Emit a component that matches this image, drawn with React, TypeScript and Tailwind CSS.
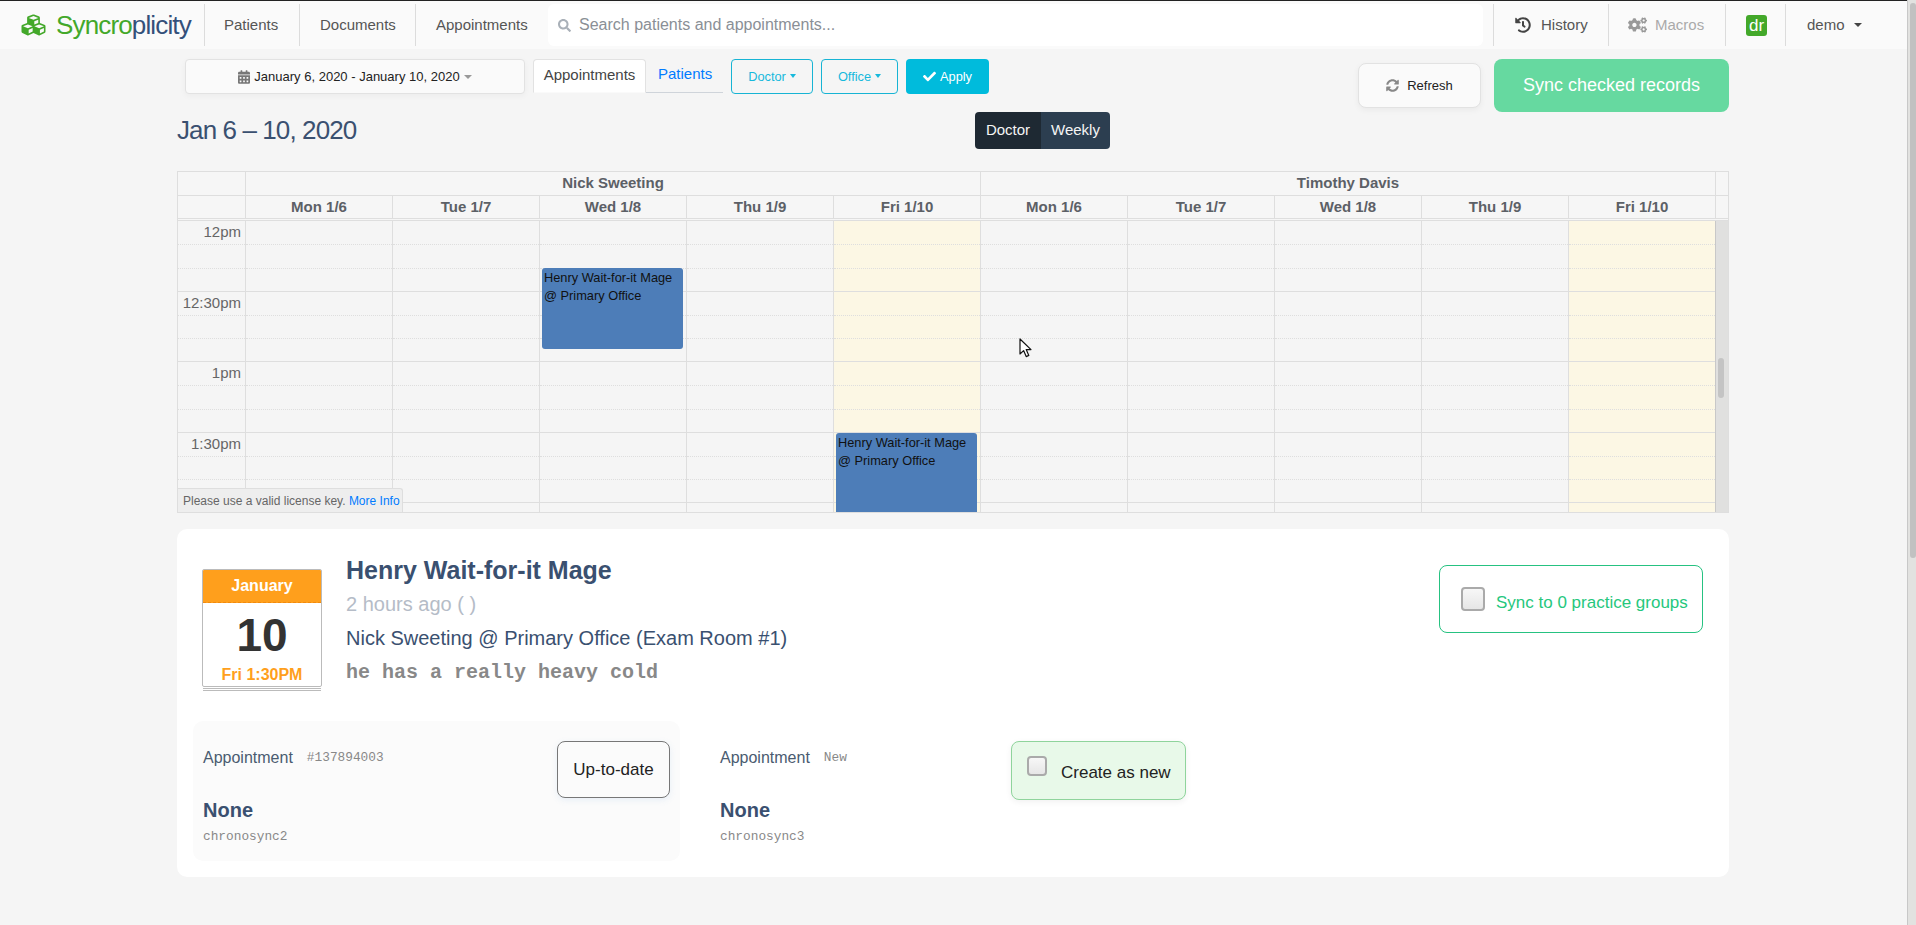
import React from "react";
import { FaCubes, FaSearch, FaHistory, FaCogs, FaCalendarAlt, FaCheck, FaSyncAlt } from "react-icons/fa";

const slots = [
  { h: "h-[24px]", b: "border-dotted" },
  { h: "h-[24px]", b: "border-dotted" },
  { h: "h-[23px]", b: "border-solid" },
  { h: "h-[24px]", b: "border-dotted" },
  { h: "h-[23px]", b: "border-dotted" },
  { h: "h-[23px]", b: "border-solid" },
  { h: "h-[24px]", b: "border-dotted" },
  { h: "h-[24px]", b: "border-dotted" },
  { h: "h-[23px]", b: "border-solid" },
  { h: "h-[24px]", b: "border-dotted" },
  { h: "h-[23px]", b: "border-dotted" },
  { h: "h-[23px]", b: "border-solid" },
];

const days = ["Mon 1/6", "Tue 1/7", "Wed 1/8", "Thu 1/9", "Fri 1/10"];
const allDays = [...days, ...days];
const times: Record<number, string> = { 0: "12pm", 3: "12:30pm", 6: "1pm", 9: "1:30pm" };

function Slots({ gutter }: { gutter?: boolean }) {
  return (
    <>
      {slots.map((s, i) => (
        <div key={i} className={`${s.h} ${s.b} border-b border-[#dedede] flex items-start justify-end pr-[4px]`}>
          {gutter && times[i] ? (
            <span className="text-[15px] leading-[20px] pt-[1px] text-[#666]">{times[i]}</span>
          ) : null}
        </div>
      ))}
    </>
  );
}

function EventBlock({ top }: { top: string }) {
  return (
    <div className={`absolute left-[2px] right-[3px] ${top} h-[81px] rounded-[3px] bg-[#4d7db8] px-[2px] pt-[1px] text-[12.8px] leading-[18px] text-[#111]`}>
      Henry Wait-for-it Mage
      <br />@ Primary Office
    </div>
  );
}

function NavItem({ children, className = "" }: { children: React.ReactNode; className?: string }) {
  return <div className={`h-[42px] flex items-center border-l border-[#dcdcdc] text-[15px] ${className}`}>{children}</div>;
}

function Check({ size }: { size: string }) {
  return (
    <span className={`${size} block shrink-0 rounded-[4px] border-2 border-[#aaa] bg-[linear-gradient(#f7f7f7,#e6e6e6)]`} />
  );
}

function Caret({ color }: { color: string }) {
  return <span className={`inline-block w-0 h-0 border-x-[3px] border-x-transparent border-t-[4px] ${color}`} />;
}

export default function App() {
  return (
    <div className="flex h-screen overflow-hidden bg-[#f5f5f5] font-['Liberation_Sans',Arial,sans-serif]">
      <div className="w-[1907px] shrink-0">
        <div className="h-[1px] bg-[#222]" />
        {/* Nav */}
        <div className="h-[48px] bg-[#fafafa] flex items-center">
          <div className="w-[204px] h-[42px] flex items-center pl-[20px]">
            <FaCubes className="w-[27px] h-[24px] text-[#43a82a] shrink-0" />
            <span className="ml-[9px] text-[26px] leading-[30px] tracking-[-0.85px] text-[#43a82a]">
              Syncro<span className="text-[#34507a]">plicity</span>
            </span>
          </div>
          <NavItem className="w-[95px] pl-[19px] text-[#555]">Patients</NavItem>
          <NavItem className="w-[116px] pl-[20px] text-[#555]">Documents</NavItem>
          <NavItem className="w-[133px] pl-[20px] text-[#555]">Appointments</NavItem>
          <div className="w-[935px] h-[42px] bg-white rounded-[6px] flex items-center pl-[10px] text-[16px] text-[#8a8f96]">
            <FaSearch className="w-[13px] h-[13px] text-[#a9b0b8] mr-[8px]" />
            Search patients and appointments...
          </div>
          <div className="w-[10px]" />
          <NavItem className="w-[115px] pl-[21px] text-[#555]">
            <FaHistory className="w-[16px] h-[16px] text-[#444] mr-[10px]" />
            History
          </NavItem>
          <NavItem className="w-[117px] pl-[19px] text-[#aaa]">
            <FaCogs className="w-[19px] h-[16px] text-[#999] mr-[8px]" />
            Macros
          </NavItem>
          <NavItem className="w-[60px] pl-[20px]">
            <span className="w-[21px] h-[21px] rounded-[3px] bg-[#43a82a] text-white text-[17px] leading-[21px] text-center">dr</span>
          </NavItem>
          <NavItem className="flex-1 pl-[21px] text-[#555]">
            demo
            <span className="ml-[9px] inline-block w-0 h-0 border-x-[4px] border-x-transparent border-t-[4px] border-t-[#444]" />
          </NavItem>
        </div>

        {/* Main */}
        <div className="ml-[177px] w-[1552px] pt-[10px]">
          <div className="h-[53px] flex justify-between items-start">
            <div className="flex items-start ml-[8px]">
              <div className="w-[340px] h-[35px] rounded-[4px] border border-[#e2e2e2] bg-[#fafafa] shadow-[0_2px_6px_rgba(0,0,0,0.04)] flex items-center justify-center text-[13px] text-[#222]">
                <FaCalendarAlt className="w-[12px] h-[14px] text-[#777] mr-[4px]" />
                January 6, 2020 - January 10, 2020
                <span className="ml-[4px] inline-block w-0 h-0 border-x-[4px] border-x-transparent border-t-[4px] border-t-[#999]" />
              </div>
              <div className="ml-[8px] flex h-[34px] border-b border-[#cfd4da]">
                <div className="w-[113px] h-[34px] rounded-t-[4px] border border-[#e2e2e2] border-b-[#fafafa] bg-white flex items-center justify-center pb-[2px] text-[15px] text-[#444]">
                  Appointments
                </div>
                <div className="w-[77px] flex items-center pl-[12px] pb-[2px] text-[15px] text-[#007bff]">Patients</div>
              </div>
              <div className="ml-[8px] w-[82px] h-[35px] rounded-[4px] border border-[#17b4d4] flex items-center justify-center text-[12.8px] text-[#17b9dc]">
                Doctor<span className="ml-[4px] -mt-[2px] flex"><Caret color="border-t-[#17b9dc]" /></span>
              </div>
              <div className="ml-[8px] w-[77px] h-[35px] rounded-[4px] border border-[#17b4d4] flex items-center justify-center text-[12.8px] text-[#17b9dc]">
                Office<span className="ml-[4px] -mt-[2px] flex"><Caret color="border-t-[#17b9dc]" /></span>
              </div>
              <div className="ml-[8px] w-[83px] h-[35px] rounded-[4px] bg-[#00bbdc] flex items-center justify-center text-[12.8px] text-white">
                <FaCheck className="w-[13px] h-[13px] mr-[4px]" />
                Apply
              </div>
            </div>
            <div className="flex items-start">
              <div className="mt-[4px] w-[123px] h-[45px] rounded-[8px] border border-[#e2e2e2] bg-[#fafafa] shadow-[0_2px_6px_rgba(0,0,0,0.05)] flex items-center justify-center text-[13px] text-[#222]">
                <FaSyncAlt className="w-[13px] h-[13px] text-[#888] mr-[8px]" />
                Refresh
              </div>
              <div className="ml-[13px] w-[235px] h-[53px] rounded-[8px] bg-[#66d9a0] flex items-center justify-center text-[18px] text-white">
                Sync checked records
              </div>
            </div>
          </div>

          <div className="h-[37px] flex items-center">
            <div className="w-[798px] text-[26px] leading-[37px] tracking-[-0.9px] text-[#3a5070]">Jan 6 – 10, 2020</div>
            <div className="flex h-[37px] rounded-[4px] overflow-hidden text-[15px] text-[#f5f5f5]">
              <div className="w-[66px] bg-[#1e2933] flex items-center justify-center">Doctor</div>
              <div className="w-[69px] bg-[#2c3e50] flex items-center justify-center">Weekly</div>
            </div>
          </div>

          {/* Calendar */}
          <div className="mt-[22px] relative border border-[#dedede] bg-[#f6f6f6]">
            <div className="flex h-[24px] border-b border-[#dedede] text-[15px] font-bold text-[#5c6066]">
              <div className="w-[67px]" />
              <div className="flex-1 border-l border-[#dedede] flex items-center justify-center">Nick Sweeting</div>
              <div className="flex-1 border-l border-[#dedede] flex items-center justify-center">Timothy Davis</div>
              <div className="w-[13px] border-l border-[#dedede]" />
            </div>
            <div className="flex h-[23px] border-b border-[#dedede] text-[15px] font-bold text-[#5c6066]">
              <div className="w-[67px]" />
              {allDays.map((d, i) => (
                <div key={i} className="flex-1 basis-0 border-l border-[#dedede] flex items-center justify-center">{d}</div>
              ))}
              <div className="w-[13px] border-l border-[#dedede]" />
            </div>
            <div className="h-[1px]" />
            <div className="relative flex h-[292px] overflow-hidden border-t border-[#dedede] bg-[#f5f5f5]">
              <div className="w-[67px]"><Slots gutter /></div>
              {allDays.map((d, i) => (
                <div key={i} className={`flex-1 basis-0 relative border-l border-[#dedede] ${i % 5 === 4 ? "bg-[#fcf7e4]" : ""}`}>
                  <Slots />
                  {i === 2 ? <EventBlock top="top-[47px]" /> : null}
                  {i === 4 ? <EventBlock top="top-[212px]" /> : null}
                </div>
              ))}
              <div className="w-[13px] border-l border-[#c8c8c8] bg-[#e0e0df] pt-[137px] pl-[2px]">
                <div className="w-[6px] h-[40px] rounded-[3px] bg-[#c4c4c4]" />
              </div>
              {/* Mouse pointer */}
              <svg className="absolute left-[841px] top-[117px]" width="14" height="20" viewBox="0 0 14 20">
                <path d="M1 1 L1 16 L4.6 12.6 L7.2 18.6 L9.8 17.4 L7.2 11.6 L12 11.6 Z" fill="#fff" stroke="#111" strokeWidth="1.2" strokeLinejoin="round" />
              </svg>
            </div>
            <div className="absolute left-0 bottom-0 w-[225px] h-[24px] rounded-tr-[3px] border-t border-r border-[#dedede] bg-[#eeeeee] flex items-center pl-[5px] text-[12px] text-[#666] whitespace-nowrap">
              Please use a valid license key.&nbsp;<span className="text-[#007bff]">More Info</span>
            </div>
          </div>

          {/* Details card */}
          <div className="mt-[16px] h-[348px] rounded-[10px] bg-white pt-[26px]">
            <div className="h-[166px] flex items-start">
              <div className="ml-[25px] mt-[14px] w-[120px] shrink-0">
                <div className="border border-[#bbb] rounded-[2px] overflow-hidden bg-white">
                  <div className="h-[33px] bg-[#ff9f1c] border-b border-dashed border-[#f08a10] flex items-center justify-center text-[16px] font-bold text-white">January</div>
                  <div className="h-[83px] flex flex-col items-center">
                    <div className="mt-[6px] text-[46px] leading-[52px] font-bold text-[#333]">10</div>
                    <div className="mt-[4px] text-[16px] leading-[20px] font-bold text-[#ff9f1c]">Fri 1:30PM</div>
                  </div>
                </div>
                <div className="mt-[1px] mx-[1px] h-[3px] border-y border-[#bbb]" />
              </div>
              <div className="ml-[24px] flex-1">
                <div className="h-[30px] text-[25px] leading-[30px] font-bold text-[#3a5070]">Henry Wait-for-it Mage</div>
                <div className="mt-[4px] h-[30px] text-[20px] leading-[30px] text-[#b5bcc7]">2 hours ago ( )</div>
                <div className="mt-[4px] h-[30px] text-[20px] leading-[30px] text-[#3a5070]">Nick Sweeting @ Primary Office (Exam Room #1)</div>
                <div className="mt-[5px] h-[30px] text-[20px] leading-[30px] font-bold font-['Liberation_Mono',monospace] text-[#888]">he has a really heavy cold</div>
              </div>
              <div className="mt-[10px] mr-[26px] w-[264px] h-[68px] rounded-[8px] border border-[#26c281] flex items-start pl-[21px] pt-[21px]">
                <Check size="w-[24px] h-[24px]" />
                <span className="ml-[11px] mt-[4px] text-[17px] leading-[24px] text-[#26c77d]">Sync to 0 practice groups</span>
              </div>
            </div>
            <div className="flex items-start">
              <div className="ml-[16px] w-[487px] h-[140px] rounded-[10px] bg-[#fbfbfb] flex justify-between pl-[10px] pr-[10px]">
                <div className="pt-[27px]">
                  <div className="h-[20px] flex items-center">
                    <span className="text-[16px] text-[#4a5b70]">Appointment</span>
                    <span className="ml-[14px] text-[12.8px] font-['Liberation_Mono',monospace] text-[#888]">#137894003</span>
                  </div>
                  <div className="mt-[30px] h-[24px] text-[20px] leading-[24px] font-bold text-[#3a5070]">None</div>
                  <div className="mt-[7px] h-[16px] text-[12.8px] leading-[16px] font-['Liberation_Mono',monospace] text-[#888]">chronosync2</div>
                </div>
                <div className="mt-[20px] w-[113px] h-[57px] rounded-[8px] border border-[#777] bg-[#fbfbfb] shadow-[0_2px_6px_rgba(120,170,220,0.15)] flex items-center justify-center text-[17px] text-[#222]">Up-to-date</div>
              </div>
              <div className="ml-[30px] pl-[10px] w-[301px] pt-[27px]">
                <div className="h-[20px] flex items-center">
                  <span className="text-[16px] text-[#4a5b70]">Appointment</span>
                  <span className="ml-[14px] text-[12.8px] font-['Liberation_Mono',monospace] text-[#888]">New</span>
                </div>
                <div className="mt-[30px] h-[24px] text-[20px] leading-[24px] font-bold text-[#3a5070]">None</div>
                <div className="mt-[7px] h-[16px] text-[12.8px] leading-[16px] font-['Liberation_Mono',monospace] text-[#888]">chronosync3</div>
              </div>
              <div className="mt-[20px] w-[175px] h-[59px] rounded-[8px] border border-[#8fd49c] bg-[#e8f9e9] shadow-[0_2px_6px_rgba(0,0,0,0.06)] flex items-start pl-[15px] pt-[14px]">
                <Check size="w-[20px] h-[20px]" />
                <span className="ml-[14px] mt-[7px] text-[17px] leading-[20px] text-[#222]">Create as new</span>
              </div>
            </div>
          </div>
        </div>
      </div>

      {/* Page scrollbar */}
      <div className="w-[9px] h-[925px] border-l border-[#c8c8c8] bg-[#e2e2e0] pl-[2px] pt-[3px]">
        <div className="w-[6px] h-[555px] rounded-[3px] bg-[#c1c1c1]" />
      </div>
    </div>
  );
}
